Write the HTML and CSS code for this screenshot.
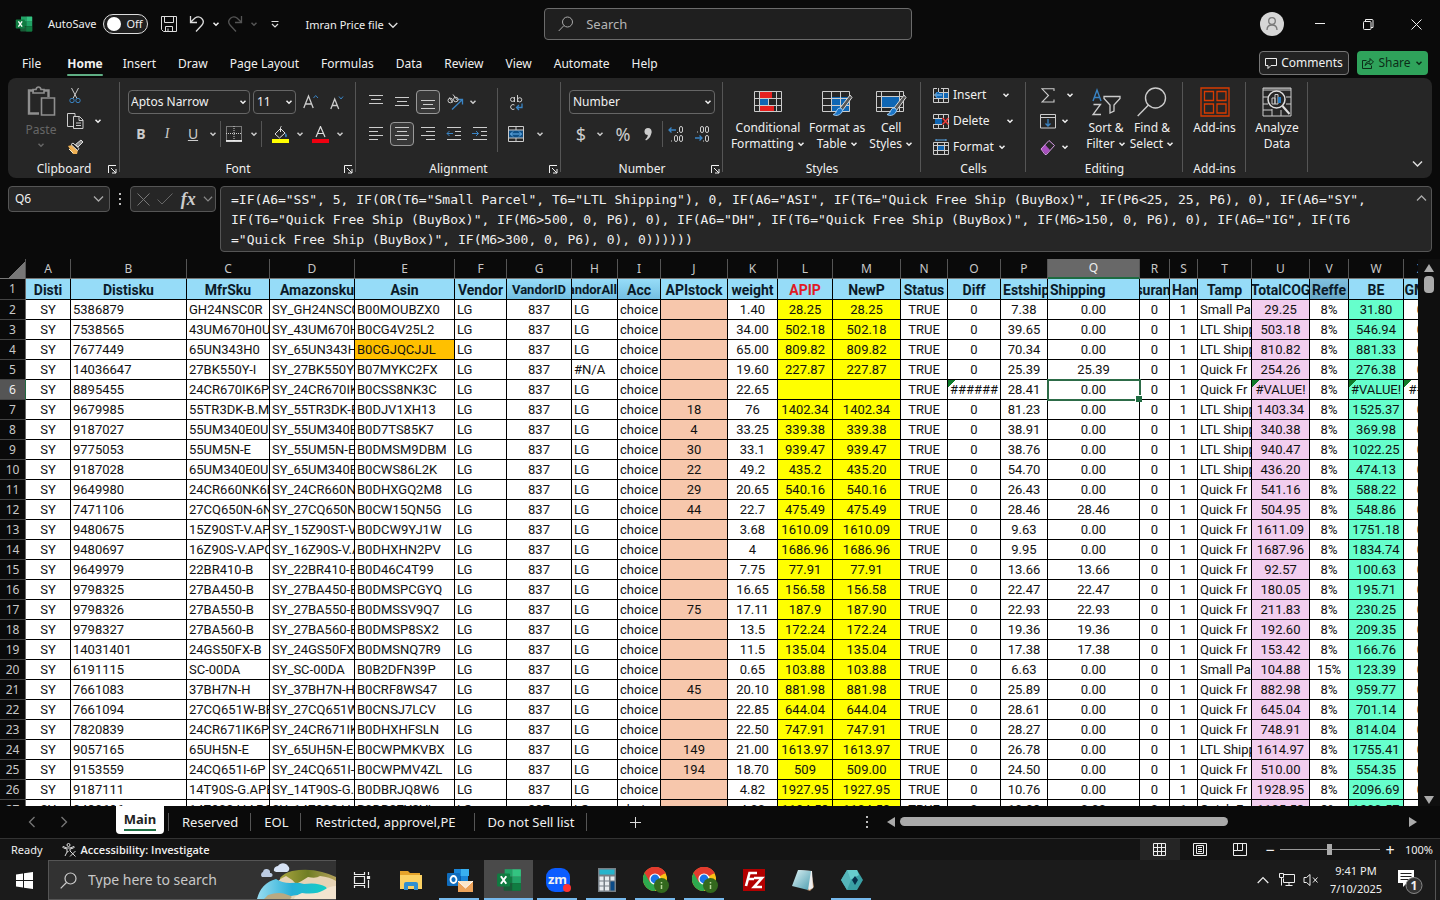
FILE: index.html
```html
<!DOCTYPE html>
<html lang="en">
<head>
<meta charset="utf-8">
<title>Imran Price file - Excel</title>
<link rel="stylesheet" href="styles.css">
</head>
<body>
<svg class="defs" aria-hidden="true">
  <defs>
    <symbol id="chev" viewBox="0 0 8 8"><path d="M1.5 2.8L4 5.2l2.500-2.400" fill="none" stroke="currentColor" stroke-width="1.500"/></symbol>
    <symbol id="launch" viewBox="0 0 10 10"><path d="M1.500 9V1.500H9M4 4l5 5M9 5v4H5" fill="none" stroke="currentColor"/></symbol>
    <symbol id="excel" viewBox="0 0 24 24"><path d="M8 2h7v7H8z" fill="#21a366"/><path d="M15 2h7.500q.5 0 .5.500V9h-8z" fill="#33c481"/><path d="M8 9h7v6H8z" fill="#107c41"/><path d="M15 9h8v6h-8z" fill="#21a366"/><path d="M7 15h16v6q0 1-1 1H8q-1 0-1-1z" fill="#185c37"/><path d="M15 15h8v6q0 1-1 1h-7z" fill="#107c41"/><rect x="1" y="6" width="12" height="12" rx="1" fill="#107c41"/><path d="M4.500 8.500l5 7M9.500 8.500l-5 7" stroke="#fff" stroke-width="1.800"/></symbol>
    <symbol id="chrome" viewBox="0 0 26 26"><circle cx="12" cy="12" r="12" fill="#fbc116"/><path d="M12 12L1.600 6A12 12 0 0 1 22.400 6z" fill="#e33b2e"/><path d="M1.600 6A12 12 0 0 0 12 24l5.200-9L12 12z" fill="#2da94f"/><path d="M12 6.500h10.800A12 12 0 0 0 1.600 6l5.200 9z" fill="#e33b2e"/><circle cx="12" cy="12" r="5.600" fill="#fff"/><circle cx="12" cy="12" r="4.400" fill="#1a73e8"/><circle cx="18.500" cy="18.500" r="7.500" fill="#33691e"/><path d="M18.500 15v1.500M18.500 18v4" stroke="#b7d89b" stroke-width="1.500"/></symbol>
  </defs>
</svg>

<header class="titlebar">
  <svg class="logo" viewBox="0 0 24 24"><use href="#excel"/></svg>
  <label class="autosave">AutoSave
    <span class="toggle"><input type="checkbox" role="switch"><span class="knob"></span><span>Off</span></span>
  </label>
  <div class="quick">
    <button aria-label="Save"><svg width="18" height="18" viewBox="0 0 18 18" fill="none" stroke="#ddd"><path d="M1.500 1.500h15v15h-13l-2-2zM4.500 1.500v6h9v-6M5.500 16.500v-5h7v5M8 16v-2.500"/></svg></button>
    <button aria-label="Undo"><svg width="16" height="18" viewBox="0 0 16 18" fill="none" stroke="#ddd" stroke-width="1.300"><path d="M1.500 1v6.500H8M1.500 7.200L6 3q3.500-2.500 6.500.2 3.500 3.500.3 7L7 16.500"/></svg></button>
    <button class="narrow" aria-label="Undo list"><svg class="chev"><use href="#chev"/></svg></button>
    <button class="dim" aria-label="Redo"><svg width="16" height="18" viewBox="0 0 16 18" fill="none" stroke="currentColor" stroke-width="1.300"><path d="M14.500 1v6.500H8M14.500 7.200L10 3Q6.500.500 3.500 3.200q-3.500 3.500-.3 7L9 16.500"/></svg></button>
    <button class="narrow dim" aria-label="Redo list"><svg class="chev"><use href="#chev"/></svg></button>
    <button class="custom" aria-label="Customize toolbar"><svg width="8" height="8" viewBox="0 0 8 8" fill="none" stroke="#ddd" stroke-width="1.200"><path d="M.5 1.500h7M1 4l3 3 3-3"/></svg></button>
  </div>
  <button class="filename">Imran Price file <svg width="10" height="7" viewBox="0 0 10 7" fill="none" stroke="#ddd" stroke-width="1.300"><path d="M.700 1l4.300 4.300L9.300 1"/></svg></button>
  <label class="search"><svg width="16" height="16" viewBox="0 0 16 16" fill="none" stroke="#aaa"><circle cx="9.500" cy="6" r="5"/><path d="M6 9.500L.700 15"/></svg><input type="text" placeholder="Search" aria-label="Search"></label>
  <div class="wincontrols">
    <button aria-label="Account"><svg width="24" height="24" viewBox="0 0 24 24"><circle cx="12" cy="12" r="12" fill="#d6d6d6"/><g fill="none" stroke="#777" stroke-width="1.300"><circle cx="12" cy="9" r="3.300"/><path d="M7 18q0-5 5-5t5 5"/></g></svg></button>
    <button aria-label="Minimize"><svg width="10" height="10" viewBox="0 0 10 10" stroke="#eee"><path d="M0 4.500h10"/></svg></button>
    <button aria-label="Restore"><svg width="11" height="11" viewBox="0 0 11 11" fill="none" stroke="#eee"><rect x=".5" y="2.500" width="7.500" height="8" rx="1"/><path d="M2.500 2.500V.500H9q1 0 1 1v7H8"/></svg></button>
    <button aria-label="Close"><svg width="11" height="11" viewBox="0 0 11 11" stroke="#eee"><path d="M.5.500l10 10M10.500.500l-10 10"/></svg></button>
  </div>
</header>

<nav class="tabs">
  <button class="file">File</button><button class="active">Home</button><button>Insert</button><button>Draw</button><button>Page Layout</button><button>Formulas</button><button>Data</button><button>Review</button><button>View</button><button>Automate</button><button>Help</button>
  <div class="actions">
    <button class="comments"><svg width="12" height="12" viewBox="0 0 12 12" fill="none" stroke="#eee"><path d="M.5 1.500h11v7H6l-3 3v-3H.5z"/></svg>Comments</button>
    <button class="share"><svg width="12" height="12" viewBox="0 0 12 12" fill="none" stroke="#0c2d18"><path d="M4.500 3.500h-4v8h9v-3M3 8.500q.5-4 5-4.500V1.500l3.500 3.500L8 8V6q-3 0-5 2.500z"/></svg>Share <svg class="chev"><use href="#chev"/></svg></button>
  </div>
</nav>

<section class="ribbon">
  <div class="group clipboard">
    <div class="body">
      <button class="paste" disabled>
        <svg width="30" height="32" viewBox="0 0 30 32" fill="none" stroke="#8f8f8f" stroke-width="1.600"><path d="M8 4.500H3v23h10M18 4.500h4.500V11" stroke-width="2.400"/><path d="M7 7V3.500h3q.5-2.500 2.500-2.500T15 3.500h3V7z"/><path d="M15.500 12h13v17h-13z"/></svg>
        <span>Paste</span><svg class="chev"><use href="#chev"/></svg>
      </button>
      <div class="stack">
        <button aria-label="Cut"><svg width="12" height="17" viewBox="0 0 12 17" fill="none"><path d="M2.500 1L8 11.500M9.500 1L4 11.500" stroke="#ccc"/><circle cx="3" cy="13.500" r="2.200" stroke="#3a84c4"/><circle cx="9" cy="13.500" r="2.200" stroke="#3a84c4"/></svg></button>
        <div class="row"><button aria-label="Copy"><svg width="17" height="17" viewBox="0 0 17 17" fill="none" stroke="#ccc"><path d="M6 13.500H.5V.500H8v3M6.500 3.500h6l3.500 3.500v8.500H6.500zM12 3.500V7.500h4M9 10h5M9 12.500h5"/></svg></button><button class="narrow" aria-label="Copy options"><svg class="chev"><use href="#chev"/></svg></button></div>
        <button aria-label="Format Painter"><svg width="17" height="16" viewBox="0 0 17 16"><path d="M1 7l4-1 6 5-1 4H6z" fill="#efb154"/><path d="M4 5.500l2-1.500 6 5.500-1.500 2z" fill="#222" stroke="#ddd"/><path d="M8.500 5.500L14 1l2 2-5 5z" fill="#888" stroke="#ddd"/><path d="M2 10l4 4" stroke="#fff0cc"/></svg></button>
      </div>
    </div>
    <div class="caption">Clipboard<button class="launch" aria-label="Clipboard settings"><svg><use href="#launch"/></svg></button></div>
  </div>

  <div class="group font">
    <div class="body lines">
      <div class="row">
        <label class="combo family"><select aria-label="Font"><option>Aptos Narrow</option></select><svg class="chev"><use href="#chev"/></svg></label>
        <label class="combo size"><select aria-label="Font size"><option>11</option></select><svg class="chev"><use href="#chev"/></svg></label>
        <button class="grow" aria-label="Grow font"><svg width="16" height="16" viewBox="0 0 16 16" fill="none"><path d="M.8 14L5.500 2l4.700 12M2.500 10h6" stroke="#ccc" stroke-width="1.300"/><path d="M10.500 4l2.200-2.500L15 4" stroke="#3a84c4"/></svg></button>
        <button aria-label="Shrink font"><svg width="14" height="15" viewBox="0 0 14 15" fill="none"><path d="M.8 14L4.700 4l4 10M2.300 10.500h5" stroke="#ccc" stroke-width="1.300"/><path d="M9 1.500L11 4l2-2.500" stroke="#3a84c4"/></svg></button>
      </div>
      <div class="row">
        <button aria-label="Bold"><b>B</b></button><button aria-label="Italic"><i class="serif">I</i></button><button aria-label="Underline"><u>U</u></button><button class="narrow" aria-label="Underline options"><svg class="chev"><use href="#chev"/></svg></button>
        <span class="vline"></span>
        <button aria-label="Borders"><svg width="16" height="16" viewBox="0 0 16 16" fill="none" stroke="#ccc"><path d="M.5.500h15v14H.5zM8 0v15M0 7.500h16" stroke-dasharray="1 1"/><path d="M0 15h16" stroke="#fff" stroke-width="1.600"/></svg></button><button class="narrow" aria-label="Border options"><svg class="chev"><use href="#chev"/></svg></button>
        <span class="vline spaced"></span>
        <button aria-label="Fill color"><svg width="17" height="17" viewBox="0 0 17 17" fill="none"><path d="M3 8l5.500-5.500L13 7 7.500 12zM8.500 6V1.500q0-1 1-1" stroke="#ddd"/><path d="M13.500 6.500q2 3 1 4.500-1 1-1.500-1z" fill="#3a84c4"/><path d="M0 13h17v4H0z" fill="#ff0"/></svg></button><button class="narrow" aria-label="Fill options"><svg class="chev"><use href="#chev"/></svg></button>
        <button aria-label="Font color"><svg width="17" height="17" viewBox="0 0 17 17" fill="none"><path d="M4 11L8.500.500 13 11M5.500 7.500h6" stroke="#ddd" stroke-width="1.200"/><path d="M0 13h17v4H0z" fill="#f00010"/></svg></button><button class="narrow" aria-label="Font color options"><svg class="chev"><use href="#chev"/></svg></button>
      </div>
    </div>
    <div class="caption">Font<button class="launch" aria-label="Font settings"><svg><use href="#launch"/></svg></button></div>
  </div>

  <div class="group align">
    <div class="body">
      <div class="lines">
        <div class="row">
          <button aria-label="Top align"><svg class="al" viewBox="0 0 16 16"><path d="M1 1.500h14M3 5.500h10M1 9.500h14"/></svg></button>
          <button aria-label="Middle align"><svg class="al" viewBox="0 0 16 16"><path d="M1 3.500h14M3 7.500h10M1 11.500h14"/></svg></button>
          <button class="on" aria-label="Bottom align"><svg class="al" viewBox="0 0 16 16"><path d="M1 6.500h14M3 10.500h10M1 14.500h14"/></svg></button>
          <button class="orient" aria-label="Orientation"><svg width="17" height="17" viewBox="0 0 17 17" fill="none"><path d="M5 15.500L15 6M10.500 5.500H15.500V10.500" stroke="#3a84c4" stroke-width="1.300"/><g stroke="#ccc"><circle cx="3.300" cy="6.500" r="2.300"/><path d="M5.500 8.500L2.500 3.500M6 .5l4.500 6"/><circle cx="8.800" cy="5.500" r="2.300"/></g></svg></button><button class="narrow" aria-label="Orientation options"><svg class="chev"><use href="#chev"/></svg></button>
        </div>
        <div class="row">
          <button aria-label="Align left"><svg class="al" viewBox="0 0 16 16"><path d="M1 1.500h14M1 5.500h9M1 9.500h14M1 13.500h9"/></svg></button>
          <button class="on" aria-label="Center"><svg class="al" viewBox="0 0 16 16"><path d="M1 1.500h14M3 5.500h10M1 9.500h14M3 13.500h10"/></svg></button>
          <button aria-label="Align right"><svg class="al" viewBox="0 0 16 16"><path d="M1 1.500h14M6 5.500h9M1 9.500h14M6 13.500h9"/></svg></button>
          <button aria-label="Decrease indent"><svg class="al" viewBox="0 0 16 16"><path d="M1 1.500h14M9 5.500h6M9 9.500h6M1 13.500h14"/><path class="blue" d="M7 7.500H1M3.500 5L1 7.500 3.500 10"/></svg></button>
          <button aria-label="Increase indent"><svg class="al" viewBox="0 0 16 16"><path d="M1 1.500h14M9 5.500h6M9 9.500h6M1 13.500h14"/><path class="blue" d="M0 7.500h6.500M4 5l2.500 2.500L4 10"/></svg></button>
        </div>
      </div>
      <span class="vline tall"></span>
      <div class="lines">
        <div class="row"><button aria-label="Wrap text"><svg width="15" height="17" viewBox="0 0 15 17" fill="none" stroke="#ccc"><circle cx="3.500" cy="5.500" r="2"/><path d="M5.500 3v5M8.500 1v7M5.500 11q-1.500-1-3 0-2 2 0 4 1.500 1 3 0"/><circle cx="10.700" cy="5.800" r="2.100"/><path d="M13 9.500v4H7.500M10 11l-2.500 2.500L10 16" stroke="#3a84c4" stroke-width="1.300"/></svg></button></div>
        <div class="row merge"><button aria-label="Merge and center"><svg width="16" height="16" viewBox="0 0 16 16" fill="none"><path d="M.5 4h15v8H.5z" fill="#0f4f86"/><path d="M.5.500h15v15H.5zM.5 4h15M.5 12h15M8 .5V4M8 12v3.500" stroke="#ccc"/><path d="M2.500 8h11M5 5.500L2.500 8 5 10.500M11 5.500L13.500 8 11 10.500" stroke="#6bb4ee"/></svg></button><button class="narrow" aria-label="Merge options"><svg class="chev"><use href="#chev"/></svg></button></div>
      </div>
    </div>
    <div class="caption">Alignment<button class="launch" aria-label="Alignment settings"><svg><use href="#launch"/></svg></button></div>
  </div>

  <div class="group number">
    <div class="body lines">
      <div class="row"><label class="combo format"><select aria-label="Number format"><option>Number</option></select><svg class="chev"><use href="#chev"/></svg></label></div>
      <div class="row">
        <button class="glyph" aria-label="Currency">$</button><button class="narrow" aria-label="Currency options"><svg class="chev"><use href="#chev"/></svg></button>
        <button class="glyph" aria-label="Percent">%</button>
        <button aria-label="Comma style"><svg width="10" height="14" viewBox="0 0 10 14"><circle cx="5" cy="4.500" r="3.500" fill="#ccc"/><path d="M8.500 4.500q0 6-5.500 9l-.7-1Q5 10.500 5 6z" fill="#ccc"/></svg></button>
        <span class="vline"></span>
        <button aria-label="Increase decimal"><svg width="16" height="16" viewBox="0 0 16 16" fill="none" stroke="#ccc"><path d="M8 4H1M3.500 1.500L1 4l2.500 2.500" stroke="#3a84c4" stroke-width="1.300"/><rect x="11.500" y=".5" width="3" height="6" rx="1.500"/><rect x="6.500" y="9.500" width="3" height="6" rx="1.500"/><rect x="11.500" y="9.500" width="3" height="6" rx="1.500"/><path d="M3.500 14.500v1M9.500 6v1"/></svg></button>
        <button aria-label="Decrease decimal"><svg width="16" height="16" viewBox="0 0 16 16" fill="none" stroke="#ccc"><path d="M1 12h7M5.500 9.500L8 12l-2.500 2.500" stroke="#3a84c4" stroke-width="1.300"/><rect x="6.500" y=".5" width="3" height="6" rx="1.500"/><rect x="11.500" y=".5" width="3" height="6" rx="1.500"/><rect x="11.500" y="9.500" width="3" height="6" rx="1.500"/><path d="M3.500 5.500v1M9.500 14.500v1"/></svg></button>
      </div>
    </div>
    <div class="caption">Number<button class="launch" aria-label="Number settings"><svg><use href="#launch"/></svg></button></div>
  </div>

  <div class="group styles">
    <div class="body">
      <button class="big"><svg width="28" height="28" viewBox="0 0 28 28"><path d="M5 4h13v6H5zM5 18h15v6H5z" fill="#e6201f"/><path d="M5 11h9v6H5z" fill="#0f66b4"/><path d="M.5 3.500h27v20H.5zM5.500 3.500v20M14.500 10v7M22.500 3.500v20M.5 10.500h27M.5 17.500h27" fill="none" stroke="#ccc"/></svg><span>Conditional<br>Formatting <svg class="chev"><use href="#chev"/></svg></span></button>
      <button class="big"><svg width="32" height="28" viewBox="0 0 32 28"><path d="M11 9h18v15H11z" fill="#0f66b4"/><path d="M1.500 3.500h27v20h-27zM10.500 3.500v20M19.500 3.500v20M1.500 10.500h27M1.500 17.500h27" fill="none" stroke="#ccc"/><path d="M29 7L19 20l2.500 2.500L31 9.500z" fill="#555" stroke="#ddd"/><path d="M20 20q3 2 .5 5-4 4-8.500 1.500 3-.5 3.500-3.500 1-3.500 4.500-3z" fill="#1b76c8" stroke="#9cc9f0"/></svg><span>Format as<br>Table <svg class="chev"><use href="#chev"/></svg></span></button>
      <button class="big"><svg width="32" height="28" viewBox="0 0 32 28"><path d="M6 8h18v12H6z" fill="#0f66b4"/><path d="M1.500 3.500h27v20h-27zM6.500 3.500v20M24.500 3.500v20M1.500 8.500h27M1.500 19.500h27" fill="none" stroke="#ccc"/><path d="M29 7L19 20l2.500 2.500L31 9.500z" fill="#555" stroke="#ddd"/><path d="M20 20q3 2 .5 5-4 4-8.500 1.500 3-.5 3.500-3.500 1-3.500 4.500-3z" fill="#1b76c8" stroke="#9cc9f0"/></svg><span>Cell<br>Styles <svg class="chev"><use href="#chev"/></svg></span></button>
    </div>
    <div class="caption">Styles</div>
  </div>

  <div class="group cells">
    <div class="body stack">
      <button><svg width="16" height="15" viewBox="0 0 16 15"><path d="M3 4h12v6H3z" fill="#0f66b4"/><path d="M4 .5H.5v14h15V.500H8M5.500 0v4M10.500 0v14M5.500 10v4M0 10.500h16M6 4.500h10" fill="none" stroke="#ccc"/><path d="M9 7H1.500M4 4.500L1.500 7 4 9.500" fill="none" stroke="#8cc6f5"/></svg><span>Insert</span><svg class="chev"><use href="#chev"/></svg></button>
      <button><svg width="16" height="15" viewBox="0 0 16 15"><path d="M2 4h7v6H2z" fill="#0f66b4"/><path d="M.5 4V.500h15v14H.5V10M5.500 0v4M10.500 0v4M5.500 10v4M10.500 11v4M0 4.500h9M0 10.500h9" fill="none" stroke="#ccc"/><path d="M9.500 4l6 6.500M15.500 4l-6 6.500" stroke="#f03c3c" stroke-width="1.500"/></svg><span>Delete</span><svg class="chev"><use href="#chev"/></svg></button>
      <button><svg width="16" height="16" viewBox="0 0 16 16"><path d="M5 6h6v5H5z" fill="#0f66b4"/><path d="M.5 3.500h15v12H.5zM4.500 3.500v12M11.500 3.500v12M.5 6.500h15M.5 11.500h15" fill="none" stroke="#ccc"/><path d="M3 1h10M3 0v2M13 0v2" stroke="#59a7e8" fill="none"/></svg><span>Format</span><svg class="chev"><use href="#chev"/></svg></button>
    </div>
    <div class="caption">Cells</div>
  </div>

  <div class="group editing">
    <div class="body">
      <div class="stack">
        <button aria-label="AutoSum" class="sum"><svg width="14" height="15" viewBox="0 0 14 15" fill="none" stroke="#ccc" stroke-width="1.100"><path d="M13 3V.800H1l6.500 6.700L1 14h12v-2.500"/></svg><svg class="chev"><use href="#chev"/></svg></button>
        <button aria-label="Fill"><svg width="16" height="15" viewBox="0 0 16 15" fill="none"><path d="M.5.500h15v13.500H.5zM.5 3.500h15" stroke="#ccc"/><path d="M8 5v7M5.500 9.500L8 12l2.500-2.500" stroke="#3a84c4" stroke-width="1.300"/></svg><svg class="chev"><use href="#chev"/></svg></button>
        <button aria-label="Clear"><svg width="16" height="15" viewBox="0 0 16 15"><path d="M1 9l4-4.500 5 5.500-4 4.500z" fill="#a94fc0"/><path d="M1 9l8-8.500 5.500 5L6.500 14.500H5z" fill="none" stroke="#d79be6"/></svg><svg class="chev"><use href="#chev"/></svg></button>
      </div>
      <button class="big"><svg width="30" height="28" viewBox="0 0 30 28" fill="none"><path d="M2 13L6 2l4 11M3.500 9.500h5" stroke="#3a84c4" stroke-width="1.400"/><path d="M2.500 16.500h7L2 26.500h8" stroke="#ccc" stroke-width="1.300"/><path d="M13 8.500h16v2l-6 6.500v6l-4 2v-8l-6-6.500z" stroke="#ccc" stroke-width="1.300"/></svg><span>Sort &amp;<br>Filter <svg class="chev"><use href="#chev"/></svg></span></button>
      <button class="big"><svg width="30" height="30" viewBox="0 0 30 30" fill="none" stroke="#ccc" stroke-width="1.400"><circle cx="18.500" cy="11" r="10"/><path d="M11.500 18L.700 29"/></svg><span>Find &amp;<br>Select <svg class="chev"><use href="#chev"/></svg></span></button>
    </div>
    <div class="caption">Editing</div>
  </div>

  <div class="group addins">
    <div class="body"><button class="big"><svg width="30" height="30" viewBox="0 0 30 30" fill="none" stroke="#d83b01" stroke-width="1.300"><path d="M1 1h28v28H1z"/><path d="M4.500 4.500h9v9h-9zM17 4.500h9v9h-9zM4.500 17h9v9h-9zM17 17h9v9h-9z"/></svg><span>Add-ins</span></button></div>
    <div class="caption">Add-ins</div>
  </div>
  <div class="group analyze">
    <div class="body"><button class="big"><svg width="30" height="30" viewBox="0 0 30 30" fill="none"><path d="M1 1h28v3H1z" fill="#777"/><path d="M1 1h28v28H1zM1 10h5M1 17h5M1 23h9M24 10h5M24 17h5M10 22v7M19 23v6" stroke="#ccc"/><circle cx="14.500" cy="12.500" r="8.500" stroke="#ddd" stroke-width="1.500" fill="#262626"/><path d="M10 11h3v6h-3zM13 7.500h3V17h-3z" stroke="#ccc"/><path d="M16 10h3v6h-3z" fill="#2a7ec4"/><path d="M20.500 19l7 8" stroke="#ddd" stroke-width="2"/></svg><span>Analyze<br>Data</span></button></div>
  </div>
  <button class="collapse" aria-label="Collapse ribbon"><svg width="11" height="8" viewBox="0 0 11 8" fill="none" stroke="#ddd" stroke-width="1.500"><path d="M1 1.500L5.500 6 10 1.500"/></svg></button>
</section>

<section class="formula">
  <div class="namebox"><input type="text" value="Q6" aria-label="Name box"><button aria-label="Names"><svg width="11" height="8" viewBox="0 0 11 8" fill="none" stroke="#aaa" stroke-width="1.300"><path d="M1 1.500L5.500 6 10 1.500"/></svg></button></div>
  <svg class="dots" width="4" height="14" viewBox="0 0 4 14" fill="#bbb"><path d="M1 1h2v2H1zM1 6h2v2H1zM1 11h2v2H1z"/></svg>
  <div class="fx">
    <button aria-label="Cancel"><svg width="13" height="13" viewBox="0 0 13 13" stroke="#777"><path d="M.5.500l12 12M12.500.500l-12 12"/></svg></button>
    <button aria-label="Enter"><svg width="16" height="12" viewBox="0 0 16 12" fill="none" stroke="#666"><path d="M.5 6.500L5 11 15.500.500"/></svg></button>
    <button class="fxb">fx</button>
    <button aria-label="Function list"><svg width="10" height="8" viewBox="0 0 11 8" fill="none" stroke="#888" stroke-width="1.300"><path d="M1 1.500L5.500 6 10 1.500"/></svg></button>
  </div>
  <div class="bar">
    <textarea rows="3" aria-label="Formula" spellcheck="false">=IF(A6="SS", 5, IF(OR(T6="Small Parcel", T6="LTL Shipping"), 0, IF(A6="ASI", IF(T6="Quick Free Ship (BuyBox)", IF(P6&lt;25, 25, P6), 0), IF(A6="SY",
IF(T6="Quick Free Ship (BuyBox)", IF(M6&gt;500, 0, P6), 0), IF(A6="DH", IF(T6="Quick Free Ship (BuyBox)", IF(M6&gt;150, 0, P6), 0), IF(A6="IG", IF(T6
="Quick Free Ship (BuyBox)", IF(M6&gt;300, 0, P6), 0), 0))))))</textarea>
    <button aria-label="Collapse formula bar"><svg width="11" height="8" viewBox="0 0 11 8" fill="none" stroke="#aaa" stroke-width="1.300"><path d="M1 6.500L5.500 2 10 6.500"/></svg></button>
  </div>
</section>

<main class="grid">
  <div class="sheet"><table id="sheet"><colgroup></colgroup><thead></thead><tbody></tbody></table></div>
  <div class="vscroll"><span class="up"></span><span class="thumb"></span><span class="down"></span></div>
</main>

<footer class="sheets">
  <div class="arrows"><button aria-label="Previous sheet"><svg width="8" height="12" viewBox="0 0 8 12" fill="none" stroke="#777" stroke-width="1.300"><path d="M6.500 1L1.500 6l5 5"/></svg></button><button aria-label="Next sheet"><svg width="8" height="12" viewBox="0 0 8 12" fill="none" stroke="#777" stroke-width="1.300"><path d="M1.500 1l5 5-5 5"/></svg></button></div>
  <button class="current"><span>Main</span></button>
  <div class="others"><button>Reserved</button><button>EOL</button><button class="wide">Restricted, approvel,PE</button><button>Do not Sell list</button></div>
  <button class="plus" aria-label="New sheet"><svg width="11" height="11" viewBox="0 0 11 11" stroke="#ddd"><path d="M5.500 0v11M0 5.500h11"/></svg></button>
  <svg class="more" width="4" height="14" viewBox="0 0 4 14" fill="#bbb"><path d="M1 1h2v2H1zM1 6h2v2H1zM1 11h2v2H1z"/></svg>
  <div class="hscroll"><span class="left"></span><span class="track"><span class="thumb"></span></span><span class="right"></span></div>
</footer>

<div class="status">
  <span class="ready">Ready</span>
  <button class="access"><svg width="15" height="14" viewBox="0 0 15 14" fill="none" stroke="#ddd"><circle cx="6.500" cy="2" r="1.500"/><path d="M1 3.500q-.5 1 .5 1.500L5 6v3L3 13M12 3.500q.5 1-.5 1.500L8 6v2M1 3.500l4 1.500h3l4-1.500M5 9l1.500-.500M8 8l5.500 5.500M13.500 8L8 13.500"/></svg>Accessibility: Investigate</button>
  <div class="views">
    <button class="on" aria-label="Normal view"><svg width="13" height="13" viewBox="0 0 13 13" fill="none" stroke="#eee"><path d="M.5.500h12v12H.5zM4.500.500v12M8.500.500v12M.5 4.500h12M.5 8.500h12"/></svg></button>
    <button aria-label="Page layout view"><svg width="14" height="13" viewBox="0 0 14 13" fill="none" stroke="#eee"><path d="M.5.500h13v12H.5zM3.500 2.500h7v8h-7zM5 4.500h4M5 6.500h4M5 8.500h4"/></svg></button>
    <button aria-label="Page break view"><svg width="14" height="13" viewBox="0 0 14 13" fill="none" stroke="#eee"><path d="M.5.500h13v12H.5zM4.500.500v7h5v-7M4.500 7.500H.5"/></svg></button>
  </div>
  <div class="zoom"><button aria-label="Zoom out">−</button><input type="range" min="0" max="100" value="50" aria-label="Zoom"><button aria-label="Zoom in">+</button></div>
  <button class="pct">100%</button>
</div>

<div class="taskbar">
  <button class="start" aria-label="Start"><svg width="17" height="17" viewBox="0 0 17 17" fill="#fff"><path d="M0 2.500L7 1.500V8H0zM8 1.300L17 0v8H8zM0 9h7v6.500l-7-1zM8 9h9v8l-9-1.300z"/></svg></button>
  <label class="find"><svg width="17" height="17" viewBox="0 0 17 17" fill="none" stroke="#ccc" stroke-width="1.200"><circle cx="10.500" cy="6.500" r="5.500"/><path d="M6.500 10.500L.700 16.300"/></svg><input type="text" placeholder="Type here to search" aria-label="Type here to search">
    <svg width="80" height="38" viewBox="0 0 80 38"><defs><linearGradient id="sea" x1="0" x2="1"><stop offset="0" stop-color="#9adcf0"/><stop offset=".5" stop-color="#27b0d8"/><stop offset="1" stop-color="#12cfc4"/></linearGradient><linearGradient id="hill" x1="0" x2="1"><stop offset="0" stop-color="#a9a53f"/><stop offset=".5" stop-color="#6f7d24"/><stop offset="1" stop-color="#b5a25c"/></linearGradient></defs><path d="M24 17q4-5 12-7 16-3 30 1 8 2 14 5v20H26z" fill="url(#hill)"/><path d="M10 38q-2-3 6-7Q18 20 30 15q6 3 10 8 6-3 12-7 8 2 12-1 10 1 16 5v18z" fill="#e6d3b5"/><path d="M1 38Q5 22 20 18q6 4 14 4 8-1 14 1 14-2 22 3 4 5-6 8-12 1-20 0-10 0-16 4z" fill="url(#sea)"/><path d="M46 32q14 2 22-3 6-4 12-4v13H38q0-3 8-6z" fill="#f3e4cf"/><path d="M12 34q12-4 20 0 6 1 2 4H8z" fill="#b9a981"/><path d="M18 10a4 4 0 0 1 4-5 6 6 0 0 1 10 0 3.500 3.500 0 0 1-1 6H20z" fill="#d6e2f4"/><path d="M6 16a3 3 0 0 1 1-5 3.500 3.500 0 0 1 7 1 2 2 0 0 1 1 4z" fill="#bccbe2"/></svg>
  </label>
  <div class="apps">
    <button aria-label="Task view"><svg width="18" height="18" viewBox="0 0 18 18" fill="none" stroke="#eee" stroke-width="1.200"><path d="M1.500 1v2.500h10V1M1.500 17v-2.500h10V17M1.500 5.500h10v7h-10zM15.500 1v3M15.500 9v8"/><path d="M14.500 5.500h2v2h-2z" fill="#eee"/></svg></button>
    <button aria-label="File Explorer"><svg width="24" height="24" viewBox="0 0 24 24"><path d="M1 3h8l2 2h10v4H1z" fill="#e5a32a"/><path d="M1 7h22v14H1z" fill="#fbd163"/><path d="M5 22v-6q0-2 2-2h10q2 0 2 2v6h-4v-4H9v4z" fill="#2f8fd0"/></svg></button>
    <button class="open" aria-label="Outlook"><svg width="28" height="26" viewBox="0 0 28 26"><path d="M8 2h14v14H8z" fill="#1a86d8"/><path d="M15 2h8v7h-8z" fill="#38b0f0"/><path d="M8 9h7v9H8z" fill="#0b5fab"/><rect x="1" y="6" width="13" height="13" rx="1" fill="#0f6cbd"/><ellipse cx="7.500" cy="12.500" rx="3" ry="3.500" fill="none" stroke="#fff" stroke-width="1.800"/><path d="M12 14h15v11H12z" fill="#eda35a"/><path d="M12 14l7.500 7L27 14" fill="#fce6c8" stroke="#fff"/></svg></button>
    <button class="open focus" aria-label="Excel"><svg width="26" height="26"><use href="#excel"/></svg></button>
    <button class="open" aria-label="Zoom"><span class="zm">zm</span></button>
    <button class="open" aria-label="Calculator"><svg width="20" height="24" viewBox="0 0 20 24"><path d="M1 0h18v24H1z" fill="#777f86"/><path d="M2.500 1.500h15v5h-15z" fill="#27b4cc"/><path d="M2.500 8.500h4v4h-4zM8 8.500h4v4H8zM13.500 8.500h4v4h-4zM2.500 13.500h4v4h-4zM8 13.500h4v4H8zM2.500 18.500h4v4h-4zM8 18.500h4v4H8z" fill="#e8ecef"/><path d="M13.500 13.500h4v9h-4z" fill="#0b4a86"/></svg></button>
    <button class="open" aria-label="Chrome"><svg width="26" height="26"><use href="#chrome"/></svg></button>
    <button class="open" aria-label="Chrome profile 2"><svg width="26" height="26"><use href="#chrome"/></svg></button>
    <button aria-label="FileZilla"><svg width="24" height="24" viewBox="0 0 24 24" fill="none"><path d="M1 1h22v22H1z" fill="#b30000"/><path d="M4 18L7.500 5H15M6 11h6M12 10h8l-8 9h8" stroke="#fff" stroke-width="2.600"/></svg></button>
    <button aria-label="Notepad"><svg width="24" height="24" viewBox="0 0 24 24"><defs><linearGradient id="np" x1="0" x2="1" y2="1"><stop offset="0" stop-color="#dff3f5"/><stop offset="1" stop-color="#4c9db0"/></linearGradient></defs><path d="M20 3l3 16-4 4-3-1z" fill="#b88f6a"/><path d="M7 2l14 1 1 17-4 2z" fill="#eee"/><path d="M7 2l13 1-3 19L1 18z" fill="url(#np)"/></svg></button>
    <button class="open" aria-label="Remote client"><svg width="24" height="24" viewBox="0 0 24 24"><path d="M7 2h10l6 10-6 10H7L1 12z" fill="#3aa0a5"/><path d="M7 2h10l2 5-9 5z" fill="#67cdcd"/><path d="M1 12L7 2l4 10-4 10z" fill="#55b5ba"/><path d="M12 12l3-4 3 4-3 5z" fill="#07304a"/></svg></button>
  </div>
  <div class="tray">
    <button aria-label="Hidden icons"><svg width="12" height="8" viewBox="0 0 12 8" fill="none" stroke="#eee" stroke-width="1.200"><path d="M.7 7L6 1.500 11.300 7"/></svg></button>
    <button aria-label="Network"><svg width="17" height="14" viewBox="0 0 17 14" fill="none" stroke="#eee"><path d="M5 1.500h10.500v8H4.500V5.500M10 9.500v3M6.500 12.500h7M.5.500h4v4h-4zM2.500 4.500v8"/></svg></button>
    <button aria-label="Muted"><svg width="16" height="14" viewBox="0 0 16 14" fill="none" stroke="#eee"><path d="M1 4.500h2.500L7 1.500v11L3.500 9.500H1zM10 4.500l4.500 5M14.500 4.500l-4.500 5"/></svg></button>
    <button class="clock">9:41 PM<br>7/10/2025</button>
    <button class="notify" aria-label="Notifications"><svg width="25" height="24" viewBox="0 0 25 24"><path d="M0 0h16v13H9l-4 4v-4H0z" fill="#fff"/><path d="M2.500 3.500h11M2.500 6.500h11M2.500 9.500h8" stroke="#222"/><circle cx="16" cy="15.500" r="8" fill="#333" stroke="#888"/></svg><span>1</span></button>
  </div>
</div>
<script src="app.js"></script>
</body>
</html>
```
FILE: styles.css
```css
* { box-sizing: border-box; }
body { margin: 0; height: 100vh; display: flex; flex-direction: column; background: #0a0a0a; color: #f0f0f0; font: 12px/16px "Noto Sans", "Open Sans", sans-serif; overflow: hidden; }
button, input, select, textarea { font: inherit; color: inherit; background: none; border: 0; padding: 0; margin: 0; outline: 0; }
button { display: flex; align-items: center; justify-content: center; white-space: nowrap; }
svg { flex: none; }
.defs { position: absolute; width: 0; height: 0; }
.chev { width: 8px; height: 8px; }
.row { display: flex; align-items: center; }
.dim { color: #555; }

.titlebar { display: flex; align-items: center; height: 48px; flex: none; padding-left: 15px; position: relative; font-size: 11px; }
.logo { width: 18px; height: 18px; margin-right: 15px; }
.autosave { display: flex; align-items: center; gap: 7px; }
.toggle { display: flex; align-items: center; gap: 5px; width: 45px; height: 20px; border: 1px solid #ddd; border-radius: 10px; background: #1f1f1f; padding-left: 3px; }
.toggle input { position: absolute; opacity: 0; }
.knob { width: 14px; height: 14px; border-radius: 50%; background: #fff; }
.quick { display: flex; margin-left: 7px; }
.quick button { width: 28px; height: 28px; }
.quick .narrow { width: 10px; }
.quick .custom { width: 32px; }
.filename { gap: 4px; margin-left: 14px; padding-top: 2px; }
.search { position: absolute; left: 38%; top: 8px; display: flex; align-items: center; gap: 12px; width: 368px; height: 32px; margin-left: -3px; padding: 0 13px; border: 1px solid #6b6b6b; border-radius: 4px; background: #1f1f1f; font-size: 13px; }
.search input { flex: 1; }
::placeholder { color: #b5b5b5; opacity: 1; }
.wincontrols { display: flex; margin-left: auto; }
.wincontrols button { width: 48px; height: 48px; }

.tabs { display: flex; align-items: center; height: 30px; flex: none; padding-left: 11px; padding-right: 12px; }
.tabs > button { height: 26px; padding: 1px 11px 0; }
.tabs .file { padding-right: 15px; }
.tabs .active { font-weight: bold; position: relative; padding-right: 9px; }
.tabs .active::after { content: ""; position: absolute; left: 11px; right: 9px; bottom: 0; height: 2px; background: #5fae84; border-radius: 1px; }
.actions { margin-left: auto; display: flex; gap: 8px; }
.actions button { height: 24px; border-radius: 4px; gap: 4px; }
.comments { border: 1px solid #777; background: #222; width: 90px; }
.share { background: #2fa35b; color: #0c2d18; width: 71px; }

.ribbon { display: flex; align-items: stretch; flex: none; height: 100px; margin: 0 8px; background: #262626; border-radius: 8px; }
.group { display: flex; flex-direction: column; position: relative; padding-top: 4px; }
.group::after { content: ""; position: absolute; right: 0; top: 4px; bottom: 6px; width: 1px; background: #555; }
.body { display: flex; height: 79px; }
.caption { text-align: center; line-height: 16px; position: relative; }
.launch { position: absolute; right: 3px; top: 3px; }
.launch svg { width: 10px; height: 10px; }
.lines { display: flex; flex-direction: column; gap: 8px; padding-top: 8px; }
.lines .row { height: 24px; }
.lines button { width: 26px; height: 24px; font-size: 14px; color: #ccc; }
.lines button.narrow { width: 14px; }
.narrow { width: 20px; }
.lines .on { width: 24px; margin: 0 1px; border: 1px solid #999; border-radius: 4px; background: #383838; }
.vline { width: 1px; height: 26px; background: #555; }
.vline.tall { height: 64px; margin-top: 6px; }
.serif { font-family: "Liberation Serif", serif; }
.al { width: 16px; height: 16px; fill: none; stroke: #ccc; }
.al .blue { stroke: #3a84c4; }
.clipboard { width: 112px; }
.clipboard .body { padding-left: 16px; gap: 1px; }
.paste { flex-direction: column; width: 34px; justify-content: flex-start; padding-top: 4px; color: #666; }
.paste span { margin: 4px 0 3px; }
.stack { display: flex; flex-direction: column; }
.stack > button, .stack .row { height: 26px; }
.stack > button { width: 32px; }
.stack .row button { width: 32px; }
.stack .row .narrow { width: 14px; }
.font { width: 236px; }
.font .lines { padding-left: 7px; }
.font .lines .row { padding-left: 1px; }
.font .spaced { margin-right: 5px; }
.font .grow { margin-left: 2px; }
.combo { display: grid; align-items: center; height: 24px; border: 1px solid #666; border-radius: 4px; }
.combo select { grid-area: 1 / 1; appearance: none; width: 100%; height: 22px; padding-left: 3px; }
.combo .chev { grid-area: 1 / 1; justify-self: end; margin-right: 2px; pointer-events: none; }
.family { width: 122px; margin-right: 3px; }
.family select { padding-left: 2px; }
.size { width: 43px; }
.align { width: 205px; }
.align .body { padding-left: 7px; }
.align .vline { margin-left: 4px; }
.align .orient { width: 28px; }
.align .orient + .narrow { width: 8px; }
.align .lines + .vline + .lines { padding-left: 5px; }
.merge .narrow { margin-left: 4px; }
.number { width: 162px; }
.number .lines { padding-left: 8px; }
.format { width: 146px; }
.number .lines .glyph { font-size: 18px; width: 24px; }
.number .glyph + .narrow { margin-right: 4px; }
.number .vline { margin-left: 1px; }
.styles { width: 198px; }
.styles .body { justify-content: center; gap: 4px; }
.big { flex-direction: column; justify-content: flex-start; padding-top: 5px; align-items: center; }
.big > svg { height: 30px; }
.big span { margin-top: 3px; line-height: 16px; text-align: center; }
.cells { width: 105px; }
.cells .body { padding-left: 12px; }
.cells .stack > button { width: 76px; justify-content: flex-start; gap: 4px; }
.cells .stack > button:nth-child(-n+2) .chev { margin-left: 12px; }
.editing { width: 157px; }
.editing .body { padding-left: 14px; }
.editing .stack > button { justify-content: flex-start; gap: 5px; width: 42px; }
.editing .stack .sum { gap: 11px; padding-left: 1px; }
.editing .big { width: 46px; }
.editing .stack + .big { margin-left: 1px; }
.addins { width: 63px; }
.analyze { width: 62px; }
.addins .body, .analyze .body { justify-content: center; }
.collapse { margin-left: auto; align-self: flex-end; width: 30px; height: 28px; }

.formula { display: flex; align-items: flex-start; flex: none; margin: 8px 8px 7px; }
.namebox, .fx { display: flex; align-items: center; height: 26px; border: 1px solid #555; border-radius: 4px; background: #262626; }
.namebox { width: 102px; padding: 0 5px 0 6px; }
.namebox input { flex: 1; min-width: 0; }
.dots { margin: 6px 8px 0; }
.fx { width: 86px; justify-content: space-between; padding: 0 2px 0 6px; }
.fxb { font: italic bold 18px/20px "Liberation Serif", serif; color: #ccc; }
.bar { display: flex; align-items: flex-start; flex: 1; margin-left: 4px; border: 1px solid #555; border-radius: 4px; background: #262626; padding: 3px 4px 1px 10px; }
.bar textarea { flex: 1; font: 13px/20px "DejaVu Sans Mono", "Liberation Mono", monospace; height: 60px; resize: none; white-space: pre; overflow: hidden; }
.bar button { height: 16px; }

.grid { flex: 1; min-height: 0; display: flex; }
.sheet { flex: 1; overflow: hidden; background: #fff; }
table { table-layout: fixed; width: 1438px; border-collapse: separate; border-spacing: 0; }
th, td { height: 20px; padding: 0; border-right: 1px solid #000; border-bottom: 1px solid #000; font: 13px/20px Roboto, "Liberation Sans", sans-serif; color: #111; overflow: hidden; }
td div { display: flex; height: 19px; line-height: 20px; overflow: hidden; white-space: nowrap; justify-content: center; padding: 0 1px; }
.l div { justify-content: flex-start; padding-left: 2px; }
.r div { justify-content: flex-end; padding-right: 0; }
thead th, tbody th { background: #0a0a0a; color: #c8c8c8; font: 12px/18px "Noto Sans", sans-serif; text-align: center; }
thead th { border-right-color: #555; border-bottom-color: #777; }
tbody th { border-bottom-color: #444; border-right-color: #666; }
thead .sel { background: #686868; color: #eee; border-bottom: 2px solid #1e6b41; }
tbody .sel { background: #555; color: #eee; border-right-color: #1e6b41; }
.corner { background: linear-gradient(135deg, #0a0a0a 62%, #777 62%); }
.head td { height: 21px; background: #96dcf8; font-weight: bold; font-size: 14px; color: #0a1a28; }
.head div { height: 20px; line-height: 22px; }
.head .deep { background: linear-gradient(#96dcf8, #74bfe2); }
.head .dark { background: linear-gradient(#7fc0de, #6aa9c9); }
.head .small { font-size: 13px; }
.head .redtext { color: #e01b24; }
.peach { background: #f7c7ac; }
.yellow { background: #ff0; }
.pink { background: #f2ceef; }
.mint { background: #66ffcc; }
.orange { background: #ffc000; }
.err { background-image: linear-gradient(135deg, #0f7a2a 5px, transparent 5px); }
.cursor { position: relative; overflow: visible; outline: 2px solid #2d6b47; outline-offset: -1px; }
.cursor::after { content: ""; position: absolute; right: -3px; bottom: -3px; width: 6px; height: 6px; background: #1e6b41; border: 1px solid #fff; border-width: 1px 0 0 1px; }
.vscroll { width: 22px; display: flex; flex-direction: column; align-items: center; padding: 5px 0 2px; background: #0f0f0f; }
.up, .down { border: 5px solid transparent; border-bottom: 8px solid #aaa; border-top: 0; }
.down { border-top: 8px solid #aaa; border-bottom: 0; margin-top: auto; }
.vscroll .thumb { width: 10px; height: 17px; margin-top: 4px; border-radius: 4px; background: #aaa; }

.sheets { display: flex; align-items: flex-start; height: 32px; flex: none; font-size: 13px; padding-right: 22px; }
.arrows { display: flex; width: 116px; padding-left: 16px; }
.arrows button { width: 32px; height: 32px; }
.current { width: 48px; height: 28px; background: #fff; color: #222; border-radius: 0 0 4px 4px; font-weight: bold; margin-right: 4px; }
.current span { border-bottom: 2px solid #1e7145; line-height: 20px; font-size: 13px; }
.others { display: flex; padding-top: 7px; }
.others button { height: 18px; padding: 0 12px 0 13px; border-right: 1px solid #555; }
.others button:first-child { border-left: 1px solid #555; }
.others .wide { padding: 0 18px 0 14px; }
.plus { width: 96px; height: 32px; }
.more { margin: 9px 17px 0 auto; }
.hscroll { display: flex; align-items: center; width: 532px; height: 31px; padding: 0 1px; gap: 5px; }
.hscroll .track { flex: 1; }
.hscroll .thumb { display: block; width: 65%; height: 9px; border-radius: 5px; background: #aaa; }
.left, .right { border: 5px solid transparent; border-right: 8px solid #aaa; border-left: 0; }
.right { border-left: 8px solid #aaa; border-right: 0; }

.status { display: flex; align-items: center; height: 22px; flex: none; background: #141414; border-top: 1px solid #333; font-size: 11px; padding: 0 7px 0 11px; }
.access { margin-left: 19px; gap: 4px; font-weight: 600; font-family: "Open Sans", "Noto Sans", sans-serif; }
.views { display: flex; margin-left: auto; }
.views button { width: 40px; height: 21px; }
.views .on { background: #252525; }
.zoom { display: flex; align-items: center; padding-left: 4px; }
.zoom button { width: 12px; font-size: 16px; }
.zoom input { appearance: none; width: 100px; height: 12px; margin: 0 4px; background: linear-gradient(#999, #999) center / 100% 1px no-repeat; }
.zoom input::-webkit-slider-thumb { appearance: none; width: 5px; height: 11px; background: #aaa; }
.pct { margin-left: 9px; }

.taskbar { display: flex; height: 40px; flex: none; background: #1b1b1b; }
.start { width: 48px; }
.find { display: flex; align-items: center; width: 288px; background: #323232; border: 1px solid #555; border-right: 0; padding-left: 11px; gap: 11px; font-size: 14px; }
.find input { flex: 1; min-width: 0; }
.find ::placeholder { color: #c8c8c8; }
.apps { display: flex; padding-left: 1px; }
.apps button { width: 49px; height: 40px; position: relative; }
.apps .open::after { content: ""; position: absolute; left: 4px; right: 5px; bottom: 0; height: 2px; background: #76b9ed; }
.apps .focus { background: #4a4a4a; }
.apps .focus::after { left: 0; right: 0; }
.zm { width: 24px; height: 24px; border-radius: 9px; background: #0b5cff; font: bold 13px/22px "Noto Sans", sans-serif; position: relative; }
.zm::after { content: ""; position: absolute; right: -1px; bottom: 0; width: 8px; height: 8px; border-radius: 50%; background: #f33; }
.tray { display: flex; margin-left: auto; font-size: 12px; padding-right: 4px; border-right: 1px solid #555; margin-right: 4px; }
.tray button { width: 24px; }
.tray .clock { width: 66px; line-height: 18px; font-size: 11px; }
.tray .notify { width: 42px; display: grid; place-items: center; padding-top: 4px; }
.notify svg, .notify span { grid-area: 1 / 1; }
.notify span { padding: 7px 0 0 8px; font-weight: bold; }
```
FILE: app.js
```js
const widths = [26,45,116,83,85,100,52,65,46,43,67,50,55,68,47,53,47,92,30,28,54,58,39,55,34];
const letters = 'ABCDEFGHIJKLMNOPQRSTUVWX'.split('');
const heads = [
  ['Disti'],['Distisku'],['MfrSku'],['Amazonsku','r'],['Asin'],['Vendor'],['VandorID','deep small'],['VandorAll','deep small r'],
  ['Acc','deep'],['APIstock'],['weight'],['APIP','redtext'],['NewP'],['Status'],['Diff'],['Estship','l'],['Shipping','l'],
  ['Insurance'],['Han','l'],['Tamp'],['TotalCOG'],['Reffe','dark l'],['BE'],['GM%']
];
// distisku | mfr sku | asin | stock | weight | api price | new price | est. ship | shipping | template | total cost | referral | break-even
const S = 'Small Pa', L = 'LTL Shipp', Q = 'Quick Fr';
const data = [
  ['5386879','GH24NSC0R','B00MOUBZX0','','1.40','28.25','28.25','7.38','0.00',S,'29.25','8%','31.80'],
  ['7538565','43UM670H0U','B0CG4V25L2','','34.00','502.18','502.18','39.65','0.00',L,'503.18','8%','546.94'],
  ['7677449','65UN343H0','B0CGJQCJJL','','65.00','809.82','809.82','70.34','0.00',L,'810.82','8%','881.33'],
  ['14036647','27BK550Y-I','B07MYKC2FX','','19.60','227.87','227.87','25.39','25.39',Q,'254.26','8%','276.38'],
  ['8895455','24CR670IK6P','B0CSS8NK3C','','22.65','','','28.41','0.00',Q,'#VALUE!','8%','#VALUE!'],
  ['9679985','55TR3DK-B.M','B0DJV1XH13','18','76','1402.34','1402.34','81.23','0.00',L,'1403.34','8%','1525.37'],
  ['9187027','55UM340E0UZ','B0D7TS85K7','4','33.25','339.38','339.38','38.91','0.00',L,'340.38','8%','369.98'],
  ['9775053','55UM5N-E','B0DMSM9DBM','30','33.1','939.47','939.47','38.76','0.00',L,'940.47','8%','1022.25'],
  ['9187028','65UM340E0UZ','B0CWS86L2K','22','49.2','435.2','435.20','54.70','0.00',L,'436.20','8%','474.13'],
  ['9649980','24CR660NK6P','B0DHXGQ2M8','29','20.65','540.16','540.16','26.43','0.00',Q,'541.16','8%','588.22'],
  ['7471106','27CQ650N-6N','B0CW15QN5G','44','22.7','475.49','475.49','28.46','28.46',Q,'504.95','8%','548.86'],
  ['9480675','15Z90ST-V.AP','B0DCW9YJ1W','','3.68','1610.09','1610.09','9.63','0.00',Q,'1611.09','8%','1751.18'],
  ['9480697','16Z90S-V.APC','B0DHXHN2PV','','4','1686.96','1686.96','9.95','0.00',Q,'1687.96','8%','1834.74'],
  ['9649979','22BR410-B','B0D46C4T99','','7.75','77.91','77.91','13.66','13.66',Q,'92.57','8%','100.63'],
  ['9798325','27BA450-B','B0DMSPCGYQ','','16.65','156.58','156.58','22.47','22.47',Q,'180.05','8%','195.71'],
  ['9798326','27BA550-B','B0DMSSV9Q7','75','17.11','187.9','187.90','22.93','22.93',Q,'211.83','8%','230.25'],
  ['9798327','27BA560-B','B0DMSP8SX2','','13.5','172.24','172.24','19.36','19.36',Q,'192.60','8%','209.35'],
  ['14031401','24GS50FX-B','B0DMSNQ7R9','','11.5','135.04','135.04','17.38','17.38',Q,'153.42','8%','166.76'],
  ['6191115','SC-00DA','B0B2DFN39P','','0.65','103.88','103.88','6.63','0.00',S,'104.88','15%','123.39'],
  ['7661083','37BH7N-H','B0CRF8WS47','45','20.10','881.98','881.98','25.89','0.00',Q,'882.98','8%','959.77'],
  ['7661094','27CQ651W-BP','B0CNSJ7LCV','','22.85','644.04','644.04','28.61','0.00',Q,'645.04','8%','701.14'],
  ['7820839','24CR671IK6P','B0DHXHFSLN','','22.50','747.91','747.91','28.27','0.00',Q,'748.91','8%','814.04'],
  ['9057165','65UH5N-E','B0CWPMKVBX','149','21.00','1613.97','1613.97','26.78','0.00',L,'1614.97','8%','1755.41'],
  ['9153559','24CQ651I-6P','B0CWPMV4ZL','194','18.70','509','509.00','24.50','0.00',Q,'510.00','8%','554.35'],
  ['9187111','14T90S-G.APB','B0DBRJQ8W6','','4.82','1927.95','1927.95','10.76','0.00',Q,'1928.95','8%','2096.69'],
  ['9480696','14Z90S-V.APC','B0DBS7YSVL','','4.00','1104.58','1104.58','10.08','0.00',Q,'1105.58','8%','1200.57']
];
const cell = (text, cls = '') => `<td class="${cls}"><div>${text}</div></td>`;
const table = document.getElementById('sheet');
table.querySelector('colgroup').innerHTML = widths.map(w => `<col style="width:${w}px">`).join('');
table.tHead.innerHTML = '<tr><th class="corner"></th>' + letters.map(c => `<th${c === 'Q' ? ' class="sel"' : ''}>${c}</th>`).join('') + '</tr>';
let html = '<tr class="head"><th>1</th>' + heads.map(h => cell(h[0], h[1])).join('') + '</tr>';
data.forEach((d, i) => {
  const n = i + 2, here = n === 6, err = here ? ' err' : '';
  html += `<tr><th${here ? ' class="sel"' : ''}>${n}</th>` +
    cell('SY') + cell(d[0], 'l') + cell(d[1], 'l') + cell('SY_' + d[1], 'l') + cell(d[2], n === 4 ? 'l orange' : 'l') +
    cell('LG', 'l') + cell('837') + cell(n === 5 ? '#N/A' : 'LG', 'l') + cell('choice', 'l') + cell(d[3], 'peach') + cell(d[4]) +
    cell(d[5], 'yellow') + cell(d[6], 'yellow') + cell('TRUE') + cell(here ? '######' : '0', err) + cell(d[7]) +
    cell(d[8], here ? 'cursor' : '') + cell('0') + cell('1') + cell(d[9], 'l') + cell(d[10], 'pink' + err) + cell(d[11]) +
    cell(d[12], 'mint' + err) + cell(here ? '###' : '0', err) + '</tr>';
});
table.tBodies[0].innerHTML = html;
```
